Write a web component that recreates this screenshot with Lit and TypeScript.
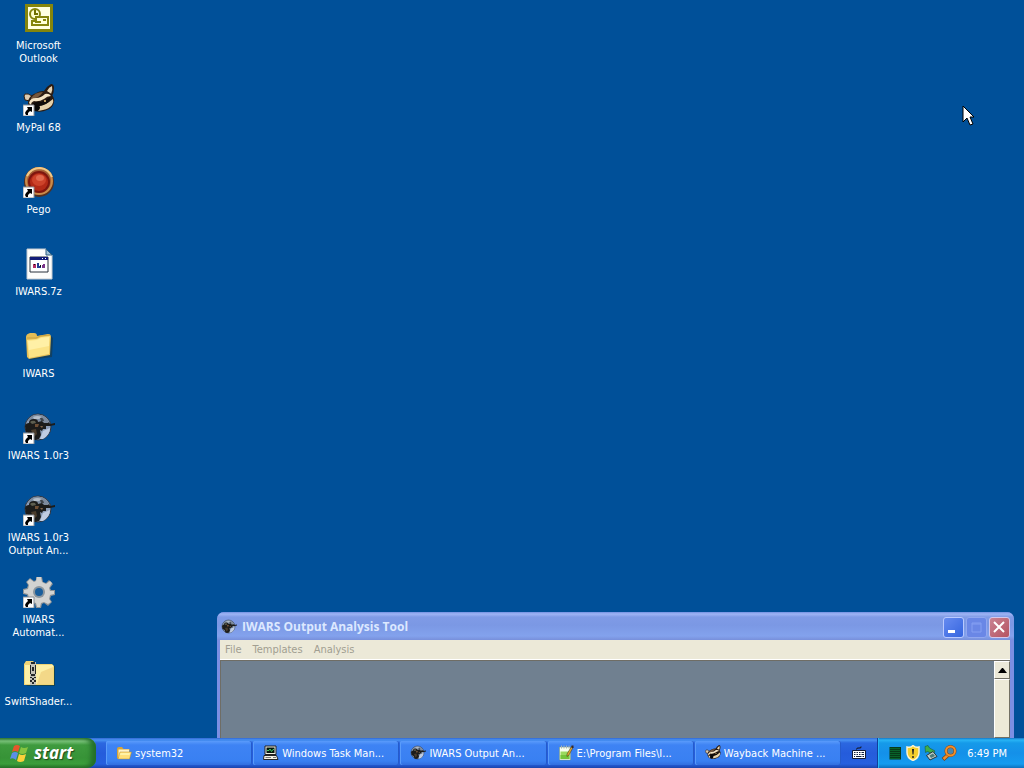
import { LitElement, css, html, svg } from 'lit'
import { customElement, property, state } from 'lit/decorators.js'

const soldier = svg`
  <circle cx="15" cy="15" r="13" fill="#8b9db8" stroke="#2c3440" stroke-width="1" />
  <path d="M5 8 Q10 1 18 3 Q26 6 26 12 L17 12 L9 13Z" fill="#7d8b9e" />
  <path d="M10 5 Q14 3 19 5 L16 7 L11 7Z" fill="#b3bdc9" />
  <path d="M20 19 L27 16 Q27 23 20 27 L17 27Z" fill="#bfcce2" />
  <path d="M17 6 Q20 5 21 9 L18 9Z" fill="#3f454c" />
  <path d="M2 14 Q3 11 6 11 Q6 7 11 7 Q15 7 15 10 L19 9 L21 11 L25 11 L26 10 L27 12 L32 11 L32 13 L27 14 L23 14 L23 17 L20 17 L19 19 L17 18 L18 23 L16 27 L12 28 L9 27 L7 22 L3 20Z" fill="#1c1c1b" />
  <path d="M7 10 Q9 8 12 9 L13 11 L9 12Z" fill="#5d5e50" />
  <path d="M12 12 L16 12 L15 15 L12 15Z" fill="#6e4f35" />
  <path d="M8 18 L13 17 L14 22 L11 25Z" fill="#4a3c2c" />
  <path d="M17 14 L20 14 L19 16Z" fill="#84664a" />
`

const raccoon = svg`
  <path d="M21 7 Q24 2 28 0 Q31 0 31 4 Q31 9 29 12 L24 10Z" fill="#2a1a10" />
  <path d="M24 7 Q26 3 29 2 Q30 6 28 10Z" fill="#e6d4b4" />
  <path d="M2 16 Q0 11 2 10 Q5 9 9 12 L7 17Z" fill="#ddcbb0" stroke="#2a1a10" />
  <path d="M5 19 Q5 12 13 9 Q20 5 27 9 Q32 13 31 18 Q30 24 24 26 Q18 29 11 27 Q5 25 5 19Z" fill="#2b1c13" />
  <path d="M8 14 Q12 8 20 8 Q18 11 15 13 L8 16Z" fill="#76583d" />
  <path d="M6 19 Q7 14 13 14 Q18 14 22 10 Q26 9 28 12 Q24 12 21 15 Q16 18 11 17 Q8 18 8 21Z" fill="#f3e3c4" />
  <path d="M17 21 Q23 21 30 15 Q31 18 29 21 Q26 25 20 26 L15 27Z" fill="#e5d1aa" />
  <path d="M9 20 Q13 17 18 18 Q24 16 27 13 Q28 17 23 20 Q17 23 12 22Z" fill="#0f0b09" />
  <path d="M11 23 Q14 20 17 23 Q17 27 13 27 Q10 26 11 23Z" fill="#080808" />
  <path d="M7 21 L10 22 L10 26 Q7 25 7 21Z" fill="#e7d3b3" />
  <circle cx="22" cy="17" r="1" fill="#f2c879" />
`

const folder = svg`
  <path d="M6 30 L29 27 L30 8 L28 6Z" fill="#1b3540" opacity="0.6" />
  <path d="M3 7 Q3 4 7 3 L11 3 Q14 3 14 6 L25 4 Q28 4 28 7 L27 25 L6 29 L4 27Z" fill="#e4bd55" />
  <path d="M4 10 L14 9 L18 7 L27 6 L26 24 L6 28Z" fill="#fbe386" />
  <path d="M5 11 L14 10 L18 8 L26 7 L26 16 L6 20Z" fill="#fff0a6" />
  <path d="M4 8 L13 8 L17 6 L27 5" fill="none" stroke="#c9a140" />
`

const icons: Record<string, any> = {
  soldier,
  raccoon,
  folder,
  outlook: svg`
    <path d="M2 2H30V30H2Z" fill="#85850c" />
    <path d="M5 5H27V27H5Z" fill="#ffffe0" />
    <circle cx="12" cy="12" r="5" fill="#ffffcf" stroke="#85850c" stroke-width="2" />
    <path d="M12 8V12H15" fill="none" stroke="#707000" stroke-width="2" />
    <path d="M13 15H25V23H9V19H13Z" fill="#ffffd7" stroke="#85850c" stroke-width="2" />
    <path d="M20 17H23V19H20ZM12 19H18V21H12Z" fill="#85850c" />
  `,
  pego: svg`
    <circle cx="16" cy="16" r="15" fill="#533021" />
    <circle cx="16" cy="15" r="13" fill="#a66137" stroke="#c98a4a" stroke-width="2" />
    <path d="M4 10 Q8 2 17 2 Q26 3 29 11" fill="none" stroke="#efc887" stroke-width="2" />
    <circle cx="16" cy="16" r="11" fill="#7e160e" />
    <circle cx="16" cy="16" r="9" fill="#b32a17" />
    <ellipse cx="16" cy="14" rx="7" ry="6" fill="#cd432a" />
    <ellipse cx="17" cy="12" rx="4" ry="3" fill="#e2694d" />
  `,
  archive: svg`
    <path d="M4 1H23L29 7V31H4Z" fill="#fdfdfb" stroke="#c5cbd1" />
    <path d="M23 1V7H29Z" fill="#9fc0d6" stroke="#315f80" />
    <path d="M7 9H25V24H7Z" fill="#fff" stroke="#29303b" stroke-width="1" />
    <path d="M7 9H25V12H7Z" fill="#121c77" />
    <path d="M19 10H20V11H19ZM22 10H23V11H22Z" fill="#fff" />
    <path d="M10 16H13V20H10Z" fill="#b32d66" />
    <path d="M14 15H16V18H18V20H14Z" fill="#233d91" />
    <path d="M19 17H20V16H22V20H19Z" fill="#793388" />
    <path d="M11 16H12V17H11ZM17 17H18V19H17Z" fill="#111" />
  `,
  gear: svg`
    <path d="M13 1H19L20 6L23 7L26 4L30 8L27 12L28 14L32 14V19L28 20L27 23L29 26L25 30L21 27L19 28L18 32H13L12 28L9 27L6 29L2 25L5 22L4 19L0 18V13L4 12L5 9L3 6L7 2L11 5L13 4Z" fill="#8d9296" />
    <path d="M14 1H18L19 6L23 8L27 5L29 7L26 12L27 15L31 15L31 18L27 19L26 23L28 26L25 28L21 26L18 27L17 31L14 31L13 27L9 26L6 28L3 25L6 22L5 18L1 17V14L5 13L6 9L4 6L7 3L11 6L13 5Z" fill="#d3d3d1" />
    <circle cx="16" cy="16" r="6" fill="#8c969e" />
    <circle cx="16" cy="16" r="4" fill="#1a5e9c" />
  `,
  zip: svg`
    <path d="M3 28H32V8H30Z" fill="#1d3b2b" opacity="0.6" />
    <path d="M1 6L3 3H10L13 6H29L31 8V27H1Z" fill="#efd477" />
    <path d="M2 7H30V26H2Z" fill="#fdf0a6" />
    <path d="M18 14L30 9V26H14Z" fill="#f3d888" />
    <path d="M7 4H13V27H7Z" fill="#c4c3b8" />
    <path d="M8 4H12V6H8ZM7 7H8V16H7ZM12 7H13V16H12ZM8 16H12V18H8ZM9 9H11V13H9ZM7 19H9V20H7ZM11 19H13V20H11ZM9 20H11V22H9ZM7 22H9V24H7ZM11 22H13V24H11ZM9 24H11V26H9Z" fill="#242829" />
  `,
  openFolder: svg`
    <path d="M2 8Q2 4 6 4H12L15 8H27V28H4L2 26Z" fill="#d7a436" />
    <path d="M5 9H26V24H5Z" fill="#fff4ca" />
    <path d="M8 14H31L27 28H4Z" fill="#ffe07a" stroke="#b98d2d" stroke-width="1" />
    <path d="M9 16H28L27 20H8Z" fill="#fff2a6" />
  `,
  computer: svg`
    <path d="M4 2H26V19H4Z" fill="#f1efe2" stroke="#222" stroke-width="2" />
    <path d="M7 5H23V16H7Z" fill="#06160c" />
    <path d="M8 11H12L14 8L17 13L20 9H22" fill="none" stroke="#45ca67" stroke-width="2" />
    <path d="M2 21H27L30 29H1Z" fill="#f4f2e6" stroke="#252525" stroke-width="2" />
    <path d="M5 24H16V26H5ZM20 24H26V26H20Z" fill="#777" />
  `,
  notepad: svg`
    <path d="M3 4H25V30H3Z" fill="#f8fff0" stroke="#73936a" stroke-width="1" />
    <path d="M5 13H23V28H5Z" fill="#9bd95e" />
    <path d="M5 20H23V28H5Z" fill="#74c43a" />
    <path d="M7 1V7M12 1V7M17 1V7M22 1V7" stroke="#a9b2b7" stroke-width="2" />
    <path d="M27 3L30 5L22 20L18 23L18 18Z" fill="#e2a62e" stroke="#322b1b" />
    <path d="M27 1H31V6H27Z" fill="#35282a" />
  `,
  keyboard: svg`
    <path d="M11 9Q11 5 16 6Q21 7 20 3" fill="none" stroke="#111" stroke-width="2" />
    <path d="M3 11H29V27H3Z" fill="#fff" stroke="#141b35" stroke-width="2" />
    <path d="M6 15H9M11 15H14M16 15H19M21 15H26M6 19H9M11 19H14M16 19H19M21 19H26M6 23H8M10 23H21M23 23H26" stroke="#14203c" stroke-width="2" />
  `,
  monitor: svg`
    <path d="M5 4H28V29H5Z" fill="#073a18" />
    <path d="M7 7H27M7 11H27M7 15H27M7 19H27M7 23H27M7 27H27" stroke="#0a8a3c" stroke-width="2" stroke-dasharray="2 2" />
  `,
  shield: svg`
    <path d="M4 4Q12 6 16 1Q21 6 28 4V15Q28 26 16 31Q4 26 4 15Z" fill="#f5cf2e" stroke="#fff4ce" stroke-width="3" />
    <path d="M14 8H18L17 19H15Z" fill="#222" />
    <circle cx="16" cy="24" r="2" fill="#222" />
  `,
  device: svg`
    <path d="M4 3L10 1L13 6L24 12L20 18L9 13L5 15Z" fill="#3fae4a" stroke="#174f2a" />
    <path d="M7 21L20 13L28 23L14 30Z" fill="#c3d0cb" stroke="#24353b" stroke-width="2" />
    <path d="M13 21L20 17L24 22L16 26Z" fill="#4d7a78" />
  `,
  search: svg`
    <path d="M14 20L4 29" stroke="#77421a" stroke-width="8" />
    <path d="M14 20L5 28" stroke="#f08f2c" stroke-width="5" />
    <circle cx="19" cy="12" r="9" fill="#4a86ae" stroke="#874616" stroke-width="6" />
    <circle cx="19" cy="12" r="9" fill="none" stroke="#f08f2c" stroke-width="4" />
  `,
}

@customElement('xp-icon')
class XpIcon extends LitElement {
  @property()
  name = ''

  @property({ type: Number })
  size = 16

  @property({ type: Boolean })
  shortcut = false

  render() {
    return html`
      <svg width=${this.size} height=${this.size} viewBox="0 0 32 32" aria-hidden="true">
        ${icons[this.name]}
        ${this.shortcut
          ? svg`
              <path d="M0 21H11V32H0Z" fill="#fff" stroke="#8a8f96" stroke-width="1" />
              <path d="M4 23H9V28L7 27L5 29L5 31H3L2 29L3 27L5 25Z" fill="#000" />
            `
          : ''}
      </svg>
    `
  }

  static styles = css`
    :host {
      display: block;
      flex: none;
    }

    svg {
      display: block;
    }
  `
}

@customElement('xp-window')
class XpWindow extends LitElement {
  @state()
  menus = ['File', 'Templates', 'Analysis']

  render() {
    return html`
      <header class="title-bar">
        <xp-icon name="soldier"></xp-icon>
        <h1 class="title">IWARS Output Analysis Tool</h1>
        <button class="control" aria-label="Minimize">
          <svg width="19" height="19"><path d="M4 12H11V15H4Z" fill="#fff" /></svg>
        </button>
        <button class="control disabled" aria-label="Maximize" disabled>
          <svg width="19" height="19">
            <path d="M5 5H14V14H5ZM5 6H14" fill="none" stroke="#859ff2" stroke-width="1" />
          </svg>
        </button>
        <button class="control close" aria-label="Close">
          <svg width="19" height="19"><path d="M4 4L14 14M14 4L4 14" stroke="#fff" stroke-width="2" /></svg>
        </button>
      </header>
      <nav class="menu">${this.menus.map((item) => html`<button class="menu-item" disabled>${item}</button>`)}</nav>
      <div class="client">
        <div class="canvas"></div>
        <div class="scrollbar">
          <button class="scroll-up" aria-label="Scroll up">
            <svg width="9" height="5"><path d="M0 5L4 0H5L9 5Z" fill="#000" /></svg>
          </button>
          <div class="thumb"></div>
        </div>
      </div>
    `
  }

  static styles = css`
    :host {
      display: flex;
      flex-direction: column;
      box-sizing: border-box;
      padding: 0 4px 0 3px;
      border-radius: 7px 7px 0 0;
      background: #7b8fe3;
    }

    .title-bar {
      display: flex;
      align-items: center;
      gap: 4px;
      height: 28px;
      margin: 0 -4px 0 -3px;
      padding: 2px 4px 0;
      box-sizing: border-box;
      border-radius: 7px 7px 0 0;
      background: linear-gradient(#7290e2, #9fb5f5 2px, #809be6 5px, #7b98e4 13px, #83a2ed 24px, #7890db);
    }

    .title {
      flex: 1;
      margin: 0 0 0 1px;
      color: #dce8ff;
      font: bold 12px/18px 'Open Sans', sans-serif;
    }

    .control {
      display: grid;
      place-items: center;
      width: 21px;
      height: 21px;
      padding: 0;
      border: 1px solid #b9c9ff;
      border-radius: 3px;
      background: linear-gradient(135deg, #668bf0, #3565df);
    }

    .control + .control {
      margin-left: -2px;
    }

    .control.disabled {
      border-color: #91a7ef;
      background: #6a87e6;
    }

    .control.close {
      border-color: #d5c7ea;
      background: linear-gradient(135deg, #c98393, #b65361);
    }

    .menu {
      display: flex;
      gap: 1px;
      height: 20px;
      box-sizing: border-box;
      border-bottom: 1px solid #fff;
      background: #ece9d8;
    }

    .menu-item {
      padding: 0 5px;
      border: 0;
      background: none;
      color: #a19e91;
      font: 11px/18px 'DejaVu Sans Condensed', 'DejaVu Sans', sans-serif;
      font-stretch: condensed;
    }

    .client {
      display: flex;
      flex: 1;
      border-left: 1px solid #6f6d65;
      border-top: 1px solid #6f6d65;
    }

    .canvas {
      flex: 1;
      background: #708090;
    }

    .scrollbar {
      display: flex;
      flex-direction: column;
      width: 16px;
      background: #ece9d8;
    }

    .scroll-up {
      display: grid;
      place-items: center;
      height: 18px;
      padding: 0;
      border: 1px solid;
      border-color: #fff #716f64 #716f64 #fff;
      background: #ece9d8;
    }

    .thumb {
      flex: 1;
      border: 1px solid;
      border-color: #fff #716f64 #716f64 #fff;
    }
  `
}

@customElement('app-root')
class AppRoot extends LitElement {
  @state()
  shortcuts = [
    { icon: 'outlook', lines: ['Microsoft', 'Outlook'] },
    { icon: 'raccoon', lines: ['MyPal 68'], link: true },
    { icon: 'pego', lines: ['Pego'], link: true },
    { icon: 'archive', lines: ['IWARS.7z'] },
    { icon: 'folder', lines: ['IWARS'] },
    { icon: 'soldier', lines: ['IWARS 1.0r3'], link: true },
    { icon: 'soldier', lines: ['IWARS 1.0r3', 'Output An...'], link: true },
    { icon: 'gear', lines: ['IWARS', 'Automat...'], link: true },
    { icon: 'zip', lines: ['SwiftShader...'] },
  ]

  @state()
  tasks = [
    { icon: 'openFolder', label: 'system32' },
    { icon: 'computer', label: 'Windows Task Man...' },
    { icon: 'soldier', label: 'IWARS Output An...' },
    { icon: 'notepad', label: 'E:\\Program Files\\I...' },
    { icon: 'raccoon', label: 'Wayback Machine ...' },
  ]

  @state()
  tray = ['monitor', 'shield', 'device', 'search']

  render() {
    return html`
      <main class="desktop">
        <div class="shortcuts">
          ${this.shortcuts.map(
            (item) => html`
              <button class="shortcut">
                <xp-icon name=${item.icon} size="32" ?shortcut=${item.link}></xp-icon>
                <span class="caption">${item.lines.map((line) => html`<span class="line">${line}</span>`)}</span>
              </button>
            `
          )}
        </div>
        <xp-window class="window"></xp-window>
        <svg class="cursor" width="13" height="21" aria-hidden="true">
          <path d="M1 1V17L5 13L8 20L11 19L8 12H12Z" fill="#fff" stroke="#000" />
        </svg>
      </main>
      <footer class="taskbar">
        <button class="start">
          <svg width="20" height="20" viewBox="0 0 20 20" aria-hidden="true">
            <path d="M4 3Q7 1 10 3L8 9Q5 7 2 9Z" fill="#e5562c" />
            <path d="M11 4Q14 6 18 4L16 10Q12 12 9 10Z" fill="#86c440" />
            <path d="M2 10Q5 8 8 10L6 17Q3 14 0 16Z" fill="#5b8fe8" />
            <path d="M9 11Q12 13 16 11L14 18Q10 20 7 18Z" fill="#fbd13a" />
          </svg>
          start
        </button>
        <nav class="tasks">
          ${this.tasks.map(
            (item) => html`
              <button class="task">
                <xp-icon name=${item.icon}></xp-icon>
                <span>${item.label}</span>
              </button>
            `
          )}
        </nav>
        <button class="language" aria-label="Keyboard layout"><xp-icon name="keyboard"></xp-icon></button>
        <div class="tray">
          ${this.tray.map((name) => html`<xp-icon name=${name}></xp-icon>`)}
          <time class="clock">6:49 PM</time>
        </div>
      </footer>
    `
  }

  static styles = css`
    :host {
      display: flex;
      flex-direction: column;
      height: 100vh;
      overflow: hidden;
      color: #fff;
      font: 11px/13px 'DejaVu Sans Condensed', 'DejaVu Sans', sans-serif;
      font-stretch: condensed;
    }

    button {
      border: 0;
      color: inherit;
      font: inherit;
    }

    .desktop {
      position: relative;
      flex: 1;
      min-height: 0;
      overflow: hidden;
      background: #005099;
    }

    .shortcuts {
      display: grid;
      grid-auto-rows: 82px;
      width: 77px;
      padding-top: 2px;
    }

    .shortcut {
      display: flex;
      flex-direction: column;
      align-items: center;
      gap: 5px;
      padding: 0;
      background: none;
    }

    .caption {
      white-space: nowrap;
    }

    .line {
      display: block;
    }

    .window {
      position: absolute;
      left: 217px;
      right: 10px;
      top: 612px;
      bottom: 0;
    }

    .cursor {
      position: absolute;
      left: 962px;
      top: 105px;
    }

    .taskbar {
      display: flex;
      height: 30px;
      background: linear-gradient(#3168d5, #4993f3 2px, #2b67e0 5px, #255cdb 15px, #2660df 26px, #1c45ac);
    }

    .start {
      display: flex;
      align-items: center;
      gap: 4px;
      width: 96px;
      padding: 0 0 1px 10px;
      border-radius: 0 9px 9px 0;
      background: linear-gradient(#397f3b, #7fc77f 3px, #3e9a3e 7px, #379337 20px, #3ca03c 26px, #287428);
      box-shadow: inset -5px 0 5px #246f2a;
      font: italic bold 17px/24px 'Open Sans', sans-serif;
      text-shadow: 1px 1px 1px #1d471d;
    }

    .tasks {
      display: flex;
      flex: 1;
      gap: 1px;
      min-width: 0;
      padding: 3px 0 3px 10px;
    }

    .task {
      display: flex;
      flex: 1;
      align-items: center;
      gap: 3px;
      min-width: 0;
      padding: 0 10px;
      overflow: hidden;
      border-radius: 2px;
      background: linear-gradient(#5a9bfb, #3e83f4 4px, #3980f2 20px, #326fdf);
      box-shadow: inset 1px 0 #5a9cfa, inset -1px 0 #255bcb;
      white-space: nowrap;
    }

    .language {
      display: grid;
      place-items: center;
      width: 36px;
      padding: 0;
      background: none;
    }

    .tray {
      display: flex;
      align-items: center;
      gap: 2px;
      width: 147px;
      padding: 0 17px 0 9px;
      box-sizing: border-box;
      border-left: 1px solid #10409b;
      background: linear-gradient(#1677c7, #28b4f5 2px, #159ae9 5px, #1490e9 15px, #159bef 26px, #0d70bd);
      box-shadow: inset 1px 0 #28b8f7;
    }

    .clock {
      margin-left: auto;
      white-space: nowrap;
    }
  `
}
